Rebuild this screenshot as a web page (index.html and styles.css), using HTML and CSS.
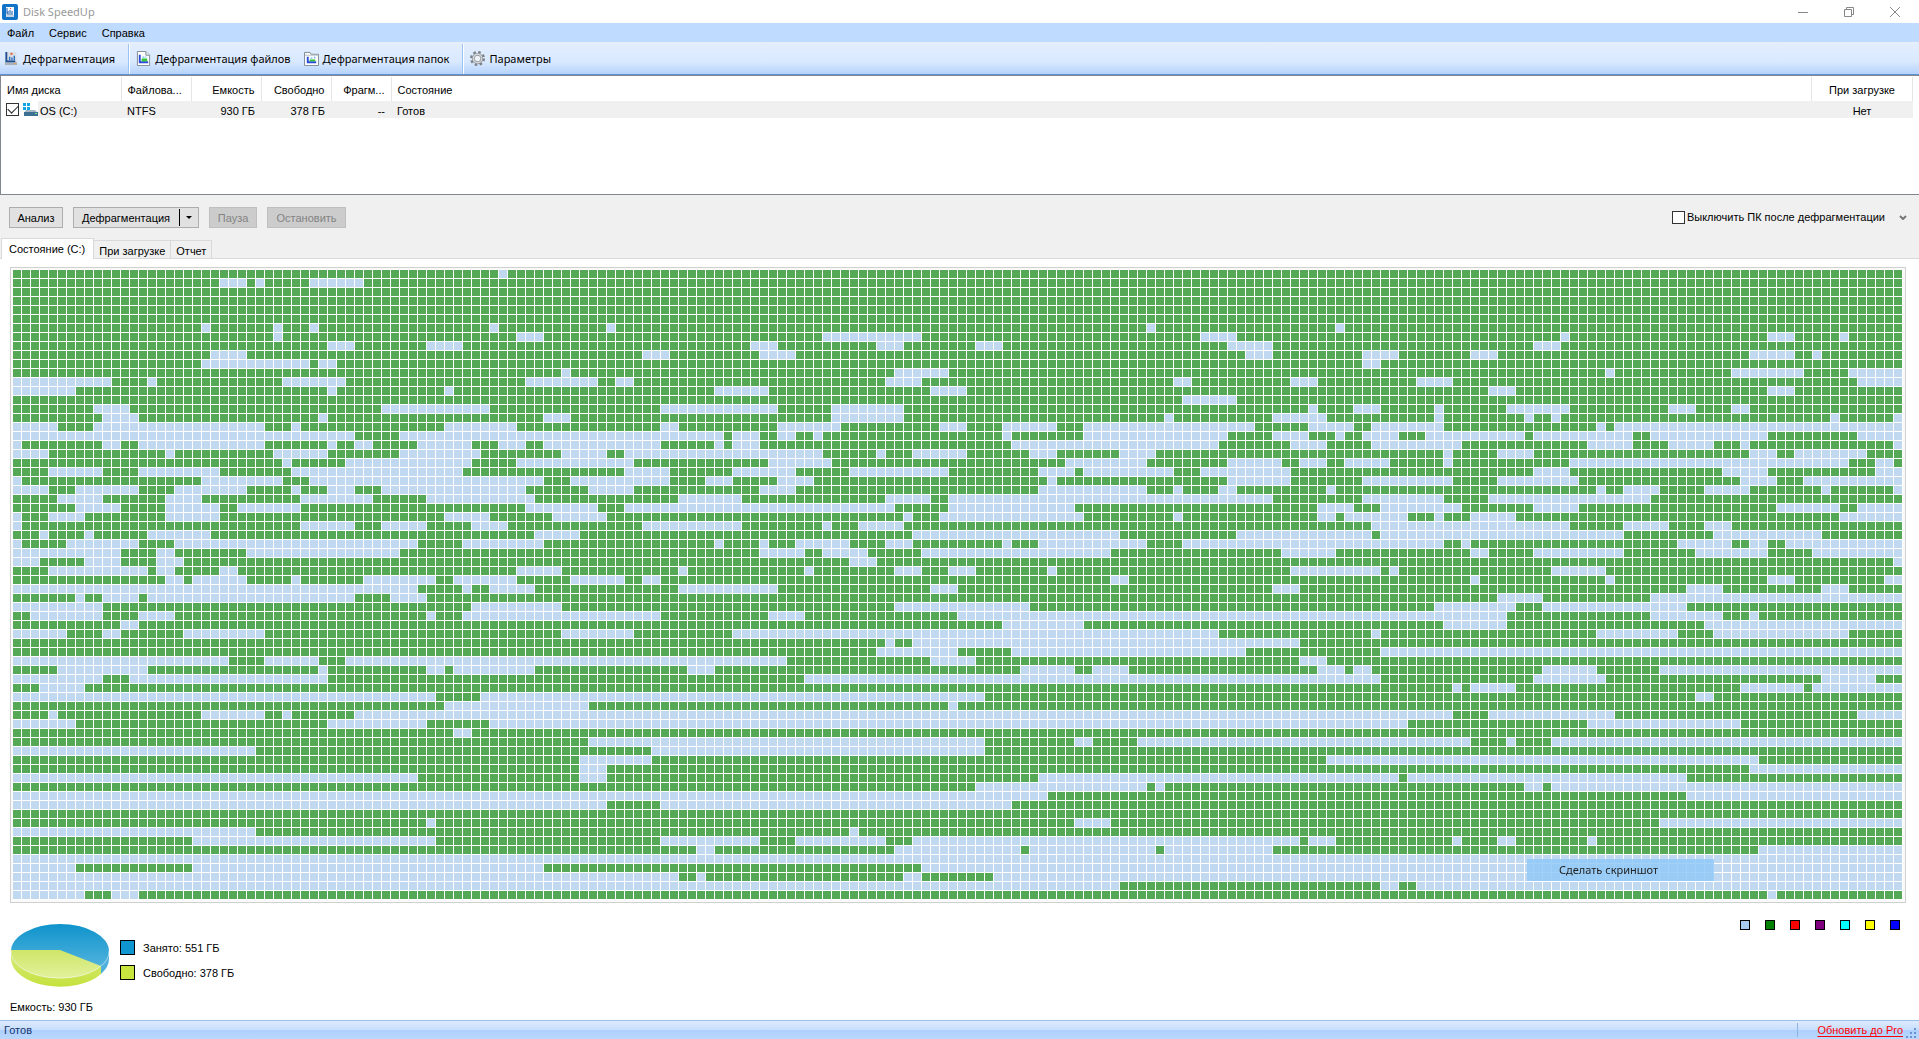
FILE: index.html
```html
<!DOCTYPE html>
<html lang="ru">
<head>
    <meta charset="UTF-8">
    <meta name="viewport" content="width=device-width, initial-scale=1.0">
    <title>Disk SpeedUp</title>
    <link rel="stylesheet" href="styles.css">
</head>
<body>
    <header class="titlebar">
        <svg class="app-icon" viewBox="0 0 16 16">
            <rect width="16" height="16" rx="2" fill="#1173c7"/>
            <rect x="4" y="3" width="8" height="10" fill="#f4f8fc"/>
            <path d="M5 4v6h6M6 9V7M8 9V6M10 9V7" stroke="#1b5fae" fill="none"/>
            <rect x="8" y="4" width="1" height="1" fill="#e8452c"/>
            <rect x="4" y="11" width="8" height="2" fill="#c9d6e2"/>
        </svg>
        <span class="title">Disk SpeedUp</span>
        <div class="window-buttons">
            <button type="button" aria-label="Свернуть"><svg viewBox="0 0 12 12"><path d="M1 6.5h10"/></svg></button>
            <button type="button" aria-label="Восстановить"><svg viewBox="0 0 12 12"><path d="M1.500 3.500h7v7h-7zM3.500 3.500v-2h7v7h-2"/></svg></button>
            <button type="button" aria-label="Закрыть"><svg viewBox="0 0 12 12"><path d="M1 1l10 10M11 1L1 11"/></svg></button>
        </div>
    </header>

    <nav class="menu">
        <button type="button">Файл</button>
        <button type="button">Сервис</button>
        <button type="button">Справка</button>
    </nav>

    <div class="toolbar">
        <button type="button">
            <svg viewBox="0 0 16 16">
                <path d="M2 1h11l1 14H1z" fill="#d9dee4"/>
                <rect x="1" y="12" width="13" height="3" fill="#a9b1ba"/>
                <path d="M2.500 1v10H12" stroke="#1d4f91" stroke-width="2" fill="none"/>
                <path d="M6 10V6M8.500 10V7M11 10V5" stroke="#2d6fc0" stroke-width="1.500"/>
                <rect x="7" y="2" width="2" height="2" fill="#e3532f"/>
                <rect x="11" y="13" width="2" height="1" fill="#f0a040"/>
            </svg>
            Дефрагментация
        </button>
        <span class="separator"></span>
        <button type="button">
            <svg viewBox="0 0 16 16">
                <path d="M1.500.5h9l4 4v11h-13z" fill="#fff" stroke="#7d8791"/>
                <path d="M10.500.5v4h4" fill="#e8ecf0" stroke="#7d8791"/>
                <path d="M4 4v8h9" stroke="#2a49d8" stroke-width="2" fill="none"/>
                <rect x="6" y="8" width="6" height="3" fill="#35c535"/>
                <rect x="7" y="6" width="2" height="1" fill="#3aa0e8"/>
                <rect x="10" y="6" width="1" height="1" fill="#3aa0e8"/>
            </svg>
            Дефрагментация файлов
        </button>
        <button type="button">
            <svg viewBox="0 0 16 16">
                <path d="M.5 15.500v-14h6l1 2h8v12z" fill="#fff" stroke="#7d8791"/>
                <path d="M1 4.500h14" stroke="#b5bcc4"/>
                <path d="M4 6v6h9" stroke="#2a49d8" stroke-width="2" fill="none"/>
                <rect x="6" y="9" width="6" height="2" fill="#35c535"/>
                <rect x="7" y="7" width="2" height="1" fill="#3aa0e8"/>
                <rect x="11" y="6" width="1" height="2" fill="#3aa0e8"/>
            </svg>
            Дефрагментация папок
        </button>
        <span class="separator"></span>
        <button type="button">
            <svg viewBox="0 0 16 16">
                <circle cx="8" cy="8" r="6.500" fill="none" stroke="#7b8084" stroke-width="3" stroke-dasharray="2.600 2.500"/>
                <circle cx="8" cy="8" r="4.500" fill="#eef3f8" stroke="#8d9297" stroke-width="3"/>
                <circle cx="8" cy="8" r="4.500" fill="none" stroke="#d3d7db" stroke-width="1.500"/>
            </svg>
            Параметры
        </button>
    </div>

    <div class="disks">
        <table>
            <colgroup>
                <col class="col-name"><col class="col-mid"><col class="col-mid"><col class="col-mid"><col class="col-frag"><col><col class="col-boot">
            </colgroup>
            <thead>
                <tr>
                    <th>Имя диска</th>
                    <th>Файлова...</th>
                    <th class="num">Емкость</th>
                    <th class="num">Свободно</th>
                    <th class="num">Фрагм...</th>
                    <th>Состояние</th>
                    <th class="boot">При загрузке</th>
                </tr>
            </thead>
            <tbody>
                <tr>
                    <td class="disk-name">
                        <label>
                            <input type="checkbox" checked>
                            <svg class="disk-icon" viewBox="0 0 16 14">
                                <path d="M1 0h3v3H1zM5 0h3v3H5zM1 4h3v3H1zM5 4h3v3H5z" fill="#12a5e6"/>
                                <path d="M4 7h9l3 3H2z" fill="#a3b7c4"/>
                                <rect x="2" y="9" width="14" height="4" fill="#3d6f93"/>
                                <rect x="13" y="10" width="2" height="1" fill="#7ef08a"/>
                            </svg>
                            <span>OS (C:)</span>
                        </label>
                    </td>
                    <td>NTFS</td>
                    <td class="num">930 ГБ</td>
                    <td class="num">378 ГБ</td>
                    <td class="num">--</td>
                    <td>Готов</td>
                    <td class="boot">Нет</td>
                </tr>
            </tbody>
        </table>
    </div>

    <div class="actions">
        <button type="button" class="btn">Анализ</button>
        <div class="split">
            <button type="button">Дефрагментация</button>
            <button type="button" class="arrow" aria-label="Другие действия"><svg viewBox="0 0 6 3"><path d="M0 0h6L3 3z"/></svg></button>
        </div>
        <button type="button" class="btn" disabled>Пауза</button>
        <button type="button" class="btn btn-wide" disabled>Остановить</button>
        <label class="shutdown"><input type="checkbox">Выключить ПК после дефрагментации</label>
        <button type="button" class="more" aria-label="Дополнительно"><svg viewBox="0 0 8 5"><path d="M1 1l3 3 3-3"/></svg></button>
    </div>

    <div class="tabs" role="tablist">
        <button type="button" role="tab" class="active">Состояние (C:)</button>
        <button type="button" role="tab">При загрузке</button>
        <button type="button" role="tab">Отчет</button>
    </div>

    <main class="page">
        <div class="map">
            <canvas id="clusters"></canvas>
            <div class="popup">Сделать скриншот</div>
        </div>
        <div class="summary">
            <div class="usage">
                <svg class="pie" viewBox="0 0 98 64">
                    <defs>
                        <linearGradient id="used" x1="0" y1="0" x2="0" y2="1">
                            <stop offset="0" stop-color="#0f93cc"/>
                            <stop offset="1" stop-color="#62bbe2"/>
                        </linearGradient>
                        <linearGradient id="free" x1="0" y1="0" x2="0" y2="1">
                            <stop offset="0" stop-color="#cfe668"/>
                            <stop offset="1" stop-color="#e2f19c"/>
                        </linearGradient>
                        <linearGradient id="side" x1="0" y1="0" x2="0" y2="1">
                            <stop offset="0" stop-color="#d8eb80"/>
                            <stop offset="1" stop-color="#c4e23c"/>
                        </linearGradient>
                    </defs>
                    <path d="M0 28v8a49 28 0 0 0 90 15v-9z" fill="url(#side)"/>
                    <path d="M98 28v8q0 8-8 15v-9z" fill="#4fb0dc"/>
                    <ellipse cx="49" cy="28" rx="49" ry="27" fill="url(#used)"/>
                    <path d="M49 27H0a49 27 0 0 0 90 16z" fill="url(#free)"/>
                    <path d="M0 28a49 27 0 0 0 90 15q8-6 8-15" fill="none" stroke="#fff" stroke-opacity=".5"/>
                </svg>
                <ul class="legend">
                    <li><i class="swatch used"></i>Занято: 551 ГБ</li>
                    <li><i class="swatch free"></i>Свободно: 378 ГБ</li>
                </ul>
                <ul class="colors">
                    <li class="c-free"></li>
                    <li class="c-green"></li>
                    <li class="c-red"></li>
                    <li class="c-purple"></li>
                    <li class="c-cyan"></li>
                    <li class="c-yellow"></li>
                    <li class="c-blue"></li>
                </ul>
            </div>
            <p class="capacity">Емкость: 930 ГБ</p>
        </div>
    </main>

    <footer class="statusbar">
        <span class="status">Готов</span>
        <a href="#">Обновить до Pro</a>
        <svg class="grip" viewBox="0 0 11 11"><path d="M8 0h2v2H8zM8 4h2v2H8zM8 8h2v2H8zM4 4h2v2H4zM4 8h2v2H4zM0 8h2v2H0z"/></svg>
    </footer>

    <script src="script.js"></script>
</body>
</html>
```
FILE: styles.css
```css
* {
    box-sizing: border-box;
}
body {
    margin: 0;
    min-height: 100vh;
    display: flex;
    flex-direction: column;
    background: #f0f0f0;
    color: #000;
    font: 11px/14px Tahoma, "Liberation Sans", sans-serif;
}
button {
    margin: 0;
    padding: 0;
    border: 0;
    background: none;
    color: inherit;
    font: inherit;
    white-space: nowrap;
}
ul, p {
    margin: 0;
    padding: 0;
    list-style: none;
}
svg {
    display: block;
}

/* title bar and menu */
.titlebar {
    display: flex;
    align-items: center;
    height: 23px;
    padding-left: 2px;
    background: #fff;
    color: #999;
    font: 11px/16px "Segoe UI", "Noto Sans", sans-serif;
}
.app-icon {
    width: 16px;
    height: 16px;
    margin-right: 5px;
}
.window-buttons {
    display: flex;
    margin-left: auto;
}
.window-buttons button {
    width: 46px;
    height: 20px;
    padding-right: 2px;
    display: flex;
    align-items: center;
    justify-content: center;
}
.window-buttons svg {
    width: 12px;
    height: 12px;
    fill: none;
    stroke: #888;
}
.menu {
    display: flex;
    gap: 15px;
    height: 20px;
    padding: 1px 7px 0;
    background: #bfdbff;
    border-bottom: 1px solid #e9eef5;
}

/* toolbar */
.toolbar {
    display: flex;
    align-items: center;
    height: 32px;
    padding-left: 4px;
    background: linear-gradient(#e3eefe, #d9e9ff 60%, #b6d3fb);
    border-bottom: 1px solid #5f92d8;
    font: 11px/16px "Segoe UI", "Noto Sans", sans-serif;
}
.toolbar button {
    display: flex;
    align-items: center;
    gap: 4px;
    margin-right: 13px;
}
.toolbar svg {
    width: 15px;
    height: 15px;
}
.separator {
    align-self: stretch;
    width: 2px;
    margin: 1px 6px 0 0;
    background: #9ac2f5;
    border-right: 1px solid #fff;
}

/* disk list */
.disks {
    height: 120px;
    padding: 1px 6px 0 0;
    background: #fff;
    border: 1px solid #828790;
    border-right: 0;
}
.disks table {
    width: 100%;
    table-layout: fixed;
    border-collapse: collapse;
}
.col-name {
    width: 120px;
}
.col-mid {
    width: 70px;
}
.col-frag {
    width: 60px;
}
.col-boot {
    width: 101px;
}
.disks th {
    height: 24px;
    padding: 1px 6px 0;
    border-right: 1px solid #e5e5e5;
    font-weight: normal;
    text-align: left;
    white-space: nowrap;
}
.disks td {
    height: 17px;
    padding: 2px 6px 0;
    background: #f0f0f0;
    white-space: nowrap;
}
.disks .num {
    text-align: right;
}
.disks .boot {
    text-align: center;
}
.disks .disk-name {
    padding: 0;
    background: linear-gradient(90deg, #fff 37px, #f0f0f0 37px);
}
.disk-name label {
    display: flex;
    align-items: center;
    padding-left: 5px;
}
.disk-name span {
    padding-top: 2px;
}
.disk-icon {
    width: 16px;
    height: 14px;
    margin: 0 2px 0 3px;
}
input[type="checkbox"] {
    appearance: none;
    width: 13px;
    height: 13px;
    margin: 0;
    background: #fff;
    border: 1px solid #333;
}
input[type="checkbox"]:checked {
    display: grid;
    place-items: center;
}
input[type="checkbox"]:checked::after {
    content: "";
    width: 9px;
    height: 5px;
    margin-bottom: 3px;
    border: solid #222;
    border-width: 0 0 1px 1px;
    rotate: -45deg;
}

/* action buttons */
.actions {
    display: flex;
    align-items: center;
    gap: 10px;
    height: 43px;
    padding: 1px 10px 0 9px;
}
.btn, .split {
    height: 21px;
    background: #e1e1e1;
    border: 1px solid #adadad;
}
.btn {
    min-width: 54px;
    padding: 1px 5px 0;
}
.btn:disabled {
    min-width: 48px;
    background: #ccc;
    border-color: #bfbfbf;
    color: #838383;
}
.btn-wide:disabled {
    min-width: 79px;
}
.split {
    display: flex;
    align-items: center;
}
.split button {
    padding: 1px 7px 0 8px;
}
.split .arrow {
    height: 17px;
    padding: 0 6px;
    margin-left: 2px;
    border-left: 1px solid #000;
}
.arrow svg {
    width: 6px;
    height: 3px;
}
.shutdown {
    display: flex;
    align-items: center;
    gap: 2px;
    margin-left: auto;
}
.more {
    padding: 0 2px 0 4px;
}
.more svg {
    width: 8px;
    height: 5px;
    fill: none;
    stroke: #777;
    stroke-width: 2;
}

/* tabs */
.tabs {
    display: flex;
    align-items: flex-end;
    height: 21px;
    padding-left: 1px;
    box-shadow: inset 0 -1px #d9d9d9;
}
.tabs button {
    height: 19px;
    padding: 2px 5px 0;
    border: 1px solid #d9d9d9;
    border-left: 0;
}
.tabs .active {
    height: 21px;
    padding: 0 8px 0 7px;
    background: #fff;
    border-left: 1px solid #d9d9d9;
    border-bottom: 0;
}

/* cluster map */
.page {
    flex: 1;
    padding: 8px 13px 0 10px;
    background: #fff;
}
.map {
    position: relative;
    padding: 2px;
    background: #fafafa;
    border: 1px solid #d0d0d0;
}
.map canvas {
    display: block;
    width: 100%;
}
.popup {
    position: absolute;
    right: 191px;
    bottom: 21px;
    width: 187px;
    padding: 3px 32px;
    background: rgba(145, 201, 247, 0.85);
    color: #222;
    font: 11px/16px "Segoe UI", "Noto Sans", sans-serif;
}

/* usage summary */
.usage {
    display: flex;
    padding-top: 17px;
}
.pie {
    width: 98px;
    height: 64px;
    margin: 3px 11px 0 1px;
}
.legend {
    display: flex;
    flex-direction: column;
    gap: 10px;
    padding-top: 20px;
}
.legend li {
    display: flex;
    align-items: center;
    gap: 8px;
    height: 15px;
}
.swatch {
    width: 15px;
    height: 15px;
    border: 1px solid #000;
}
.swatch.used {
    background: #0f96d0;
}
.swatch.free {
    background: #c8e43e;
}
.colors {
    display: flex;
    gap: 15px;
    margin: 0 6px 0 auto;
}
.colors li {
    width: 10px;
    height: 10px;
    border: 1px solid #000;
}
.c-free {
    background: #a6caf0;
}
.c-green {
    background: #008000;
}
.c-red {
    background: #f00;
}
.c-purple {
    background: #800080;
}
.c-cyan {
    background: #0ff;
}
.c-yellow {
    background: #ff0;
}
.c-blue {
    background: #00f;
}
.capacity {
    padding: 13px 0 5px;
}

/* status bar */
.statusbar {
    display: flex;
    align-items: center;
    height: 19px;
    padding: 0 2px 0 4px;
    background: linear-gradient(#deebfd, #c6defe 50%, #aed0fe 50%, #b9d8ff);
    border-top: 1px solid #9bbfe8;
    color: #15336e;
}
.statusbar a {
    margin-left: auto;
    padding-left: 19px;
    border-left: 1px solid #8fb4e3;
    color: #f00;
    text-decoration: underline;
    text-underline-offset: 2px;
}
.grip {
    width: 11px;
    height: 11px;
    margin-left: 3px;
    align-self: flex-end;
    fill: #6a93cf;
}
```
FILE: script.js
```js
const COLS = 210;

// free clusters of every row, as "start-end" runs; all others are occupied
const rows = [
    '54-55',
    '23-26 27-28 33-39',
    '',
    '',
    '',
    '',
    '21-22 29-30 33-34 53-54 66-67 126-127 147-148',
    '29-30 56-59 90-101 132-136 172-173 195-198 203-204',
    '35-38 46-50 82-85 96-99 107-110 135-140 169-172',
    '22-26 70-73 83-87 137-140 150-154 162-165 193-198 200-201',
    '21-33 34-36 150-152',
    '61-62 98-104 177-178 191-199 204-210',
    '0-11 15-16 30-37 57-65 67-69 97-101 129-131 142-145 156-160 205-210',
    '0-7 35-36 48-49 78-84 102-106 164-167 195-198',
    '130-136',
    '9-13 41-53 72-85 91-99 144-145 149-152 158-159 166-173 184-187 191-193',
    '10-14 34-35 59-62 91-99 128-129 140-146 158-159 168-169 171-172 202-203 209-210',
    '0-5 9-28 31-32 48-56 72-74 85-92 103-106 110-116 119-138 144-149 151-159 176-177 178-210',
    '0-38 43-79 80-83 85-87 89-90 110-111 119-135 140-144 147-148 150-154 157-168 169-180 182-195 205-210',
    '0-1 10-12 14-28 35-36 38-40 45-51 54-57 59-72 78-79 80-83 111-134 142-146 151-161 175-180 184-189 192-193 209-210',
    '0-4 17-18 29-35 43-52 61-66 68-90 96-97 100-106 113-116 123-127 159-160 165-169 193-196 198-206',
    '30-31 37-51 56-69 84-91 117-126 135-141 143-146 148-153 159-160 173-204 207-209',
    '4-10 14-23 31-50 68-73 80-87 93-104 114-118 119-129 132-142 169-173 190-195 207-210',
    '0-1 21-30 33-59 62-73 77-80 85-89 115-116 135-142 150-160 165-174 192-196 199-210',
    '0-4 7-14 18-26 31-32 35-38 41-57 64-69 83-87 114-126 129-130 134-136 146-147 176-177 179-183 188-193 201-202 209-210',
    '5-10 17-21 32-40 46-58 74-81 97-102 104-140 150-159 164-182',
    '7-12 17-23 25-32 57-65 68-98 104-118 145-149 152-161 169-174 196-203 205-210',
    '0-1 4-8 17-23 48-53 60-66 99-100 103-119 129-130 145-147 148-155 158-159 162-167 203-210',
    '0-1 32-38 41-46 51-55 70-81 90-91 94-99 151-173 179-184 188-191',
    '3-4 8-9 15-22 58-63 100-123 136-151 152-179 189-201',
    '0-1 6-14 18-45 50-59 78-79 83-84 87-93 97-100 110-111 114-126 130-159 161-162 185-191 193-195 197-210',
    '0-12 16-18 26-43 83-88 90-95 101-122 141-147 162-164 169-179 187-195 200-210',
    '0-3 8-12 16-19 93-96 209-210',
    '4-15 16-18 23-25 56-61 74-75 88-89 98-101 104-107 115-116 142-152 153-154 171-177',
    '17-19 20-26 31-32 39-47 49-56 62-68 70-72 122-124 162-163 177-178 195-198 208-210',
    '0-45 50-51 53-58 74-85 102-105 140-143 186-190 201-204',
    '7-8 10-14 15-38 42-46 165-170 182-210',
    '0-10 51-61 98-113 158-167 170-186',
    '2-10 14-18 46-47 50-72 84-88 105-166 182-190 193-194',
    '12-14 110-119 159-166 188-210',
    '0-6 10-12 19-28 61-69 80-134 151-152 176-185 189-204',
    '97-98 100-143',
    '96-105 111-137 152-210',
    '0-24 28-34 37-86 102-107 143-146',
    '5-15 34-35 46-48 49-58 75-78 112-118 120-124 145-148 149-151 170-176 183-210',
    '0-10 13-35 88-152 169-177 201-207',
    '3-8 160-161 162-167 192-199 200-210',
    '0-47 52-108 187-189',
    '48-64 104-105',
    '4-5 21-28 30-31 38-160 164-178 205-210',
    '0-7 35-46 53-155 175-192',
    '49-51',
    '64-108 118-120 125-162 166-167 171-210',
    '0-27 71-108',
    '63-71 146-194',
    '63-66 193-210',
    '0-45 63-66 114-154 155-186',
    '107-126 127-128 168-170 171-210',
    '0-115 186-210',
    '0-66 72-111',
    '',
    '46-47 118-122 183-210',
    '0-27 93-94',
    '20-47 72-83 87-97 100-143 144-147 160-161 165-167 175-176',
    '76-78 98-112 113-127 128-140 194-210',
    '0-210',
    '0-7 20-59 101-210',
    '0-74 76-77 99-101 109-210',
    '0-123 152-154 156-210',
    '0-8 11-14 195-196'
];

function drawMap() {
    const canvas = document.getElementById('clusters');
    const cell = Math.max(3, Math.floor(canvas.clientWidth / COLS));
    canvas.width = canvas.clientWidth;
    canvas.height = cell * rows.length;

    const ctx = canvas.getContext('2d');
    ctx.fillStyle = '#fff';
    ctx.fillRect(0, 0, canvas.width, canvas.height);

    rows.forEach((row, y) => {
        const free = new Set();
        row.split(' ').filter(Boolean).forEach(run => {
            const [start, end] = run.split('-').map(Number);
            for (let x = start; x < end; x++) free.add(x);
        });
        for (let x = 0; x < COLS; x++) {
            ctx.fillStyle = free.has(x) ? '#c0d8f0' : '#55a855';
            ctx.fillRect(x * cell, y * cell, cell - 1, cell - 1);
        }
    });
}

drawMap();
window.addEventListener('resize', drawMap);
```
